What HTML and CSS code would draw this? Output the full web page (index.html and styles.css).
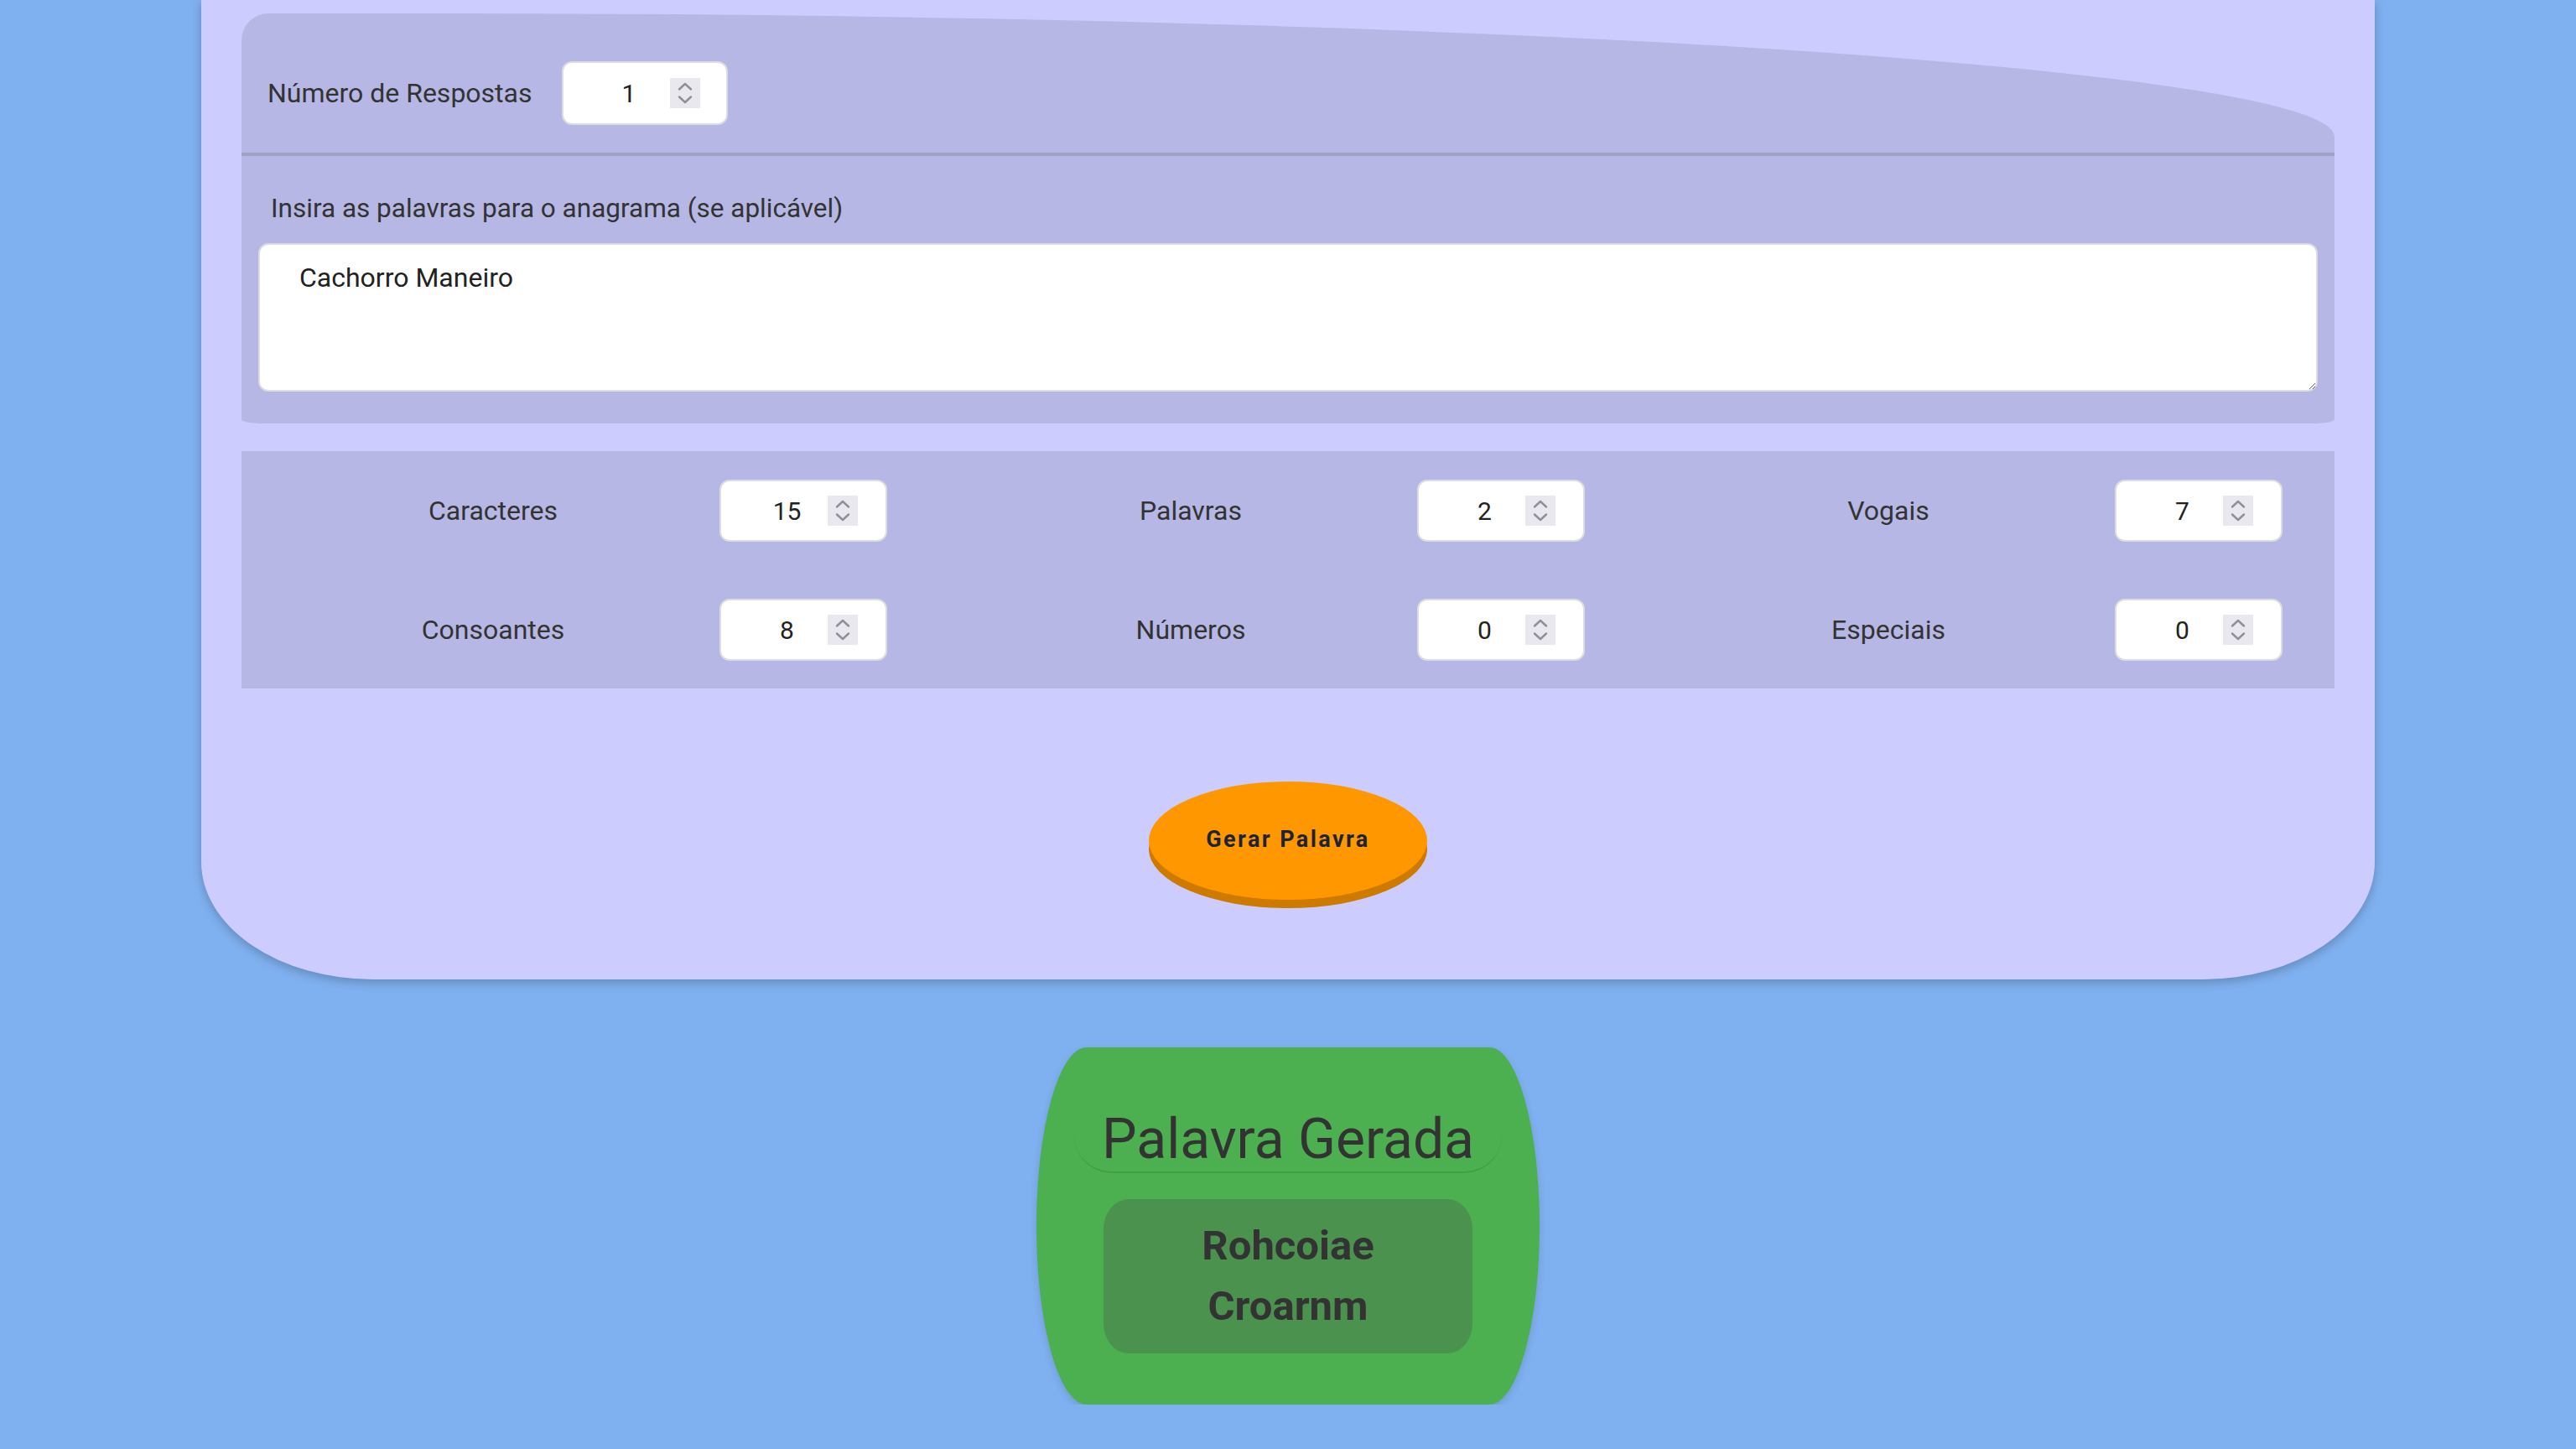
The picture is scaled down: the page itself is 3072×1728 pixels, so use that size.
FILE: index.html
```html
<!DOCTYPE html>
<html lang="pt">
<head>
<meta charset="utf-8">
<title>Gerador de Palavras</title>
<link rel="stylesheet" href="styles.css">
</head>
<body>
<div class="card">
  <div class="panel top-panel">
    <div class="resp-row">
      <span class="label">Número de Respostas</span>
      <div class="num num-resp"><span class="val">1</span><span class="spin"><svg viewBox="0 0 36 36" width="36" height="36"><path d="M11 13.5 L18 7 L25 13.5 M11 22.5 L18 29 L25 22.5" fill="none" stroke="#8e8e9c" stroke-width="2.4" stroke-linecap="round" stroke-linejoin="round"/></svg></span></div>
    </div>
    <div class="anagram">
      <label class="label anag-label" for="words">Insira as palavras para o anagrama (se aplicável)</label>
      <textarea id="words" class="words">Cachorro Maneiro</textarea>
    </div>
  </div>

  <div class="panel stats">
    <div class="cell"><span class="label stat-label">Caracteres</span><div class="num"><span class="val">15</span><span class="spin"><svg viewBox="0 0 36 36" width="36" height="36"><path d="M11 13.5 L18 7 L25 13.5 M11 22.5 L18 29 L25 22.5" fill="none" stroke="#8e8e9c" stroke-width="2.4" stroke-linecap="round" stroke-linejoin="round"/></svg></span></div></div>
    <div class="cell"><span class="label stat-label">Palavras</span><div class="num"><span class="val">2</span><span class="spin"><svg viewBox="0 0 36 36" width="36" height="36"><path d="M11 13.5 L18 7 L25 13.5 M11 22.5 L18 29 L25 22.5" fill="none" stroke="#8e8e9c" stroke-width="2.4" stroke-linecap="round" stroke-linejoin="round"/></svg></span></div></div>
    <div class="cell"><span class="label stat-label">Vogais</span><div class="num"><span class="val">7</span><span class="spin"><svg viewBox="0 0 36 36" width="36" height="36"><path d="M11 13.5 L18 7 L25 13.5 M11 22.5 L18 29 L25 22.5" fill="none" stroke="#8e8e9c" stroke-width="2.4" stroke-linecap="round" stroke-linejoin="round"/></svg></span></div></div>
    <div class="cell"><span class="label stat-label">Consoantes</span><div class="num"><span class="val">8</span><span class="spin"><svg viewBox="0 0 36 36" width="36" height="36"><path d="M11 13.5 L18 7 L25 13.5 M11 22.5 L18 29 L25 22.5" fill="none" stroke="#8e8e9c" stroke-width="2.4" stroke-linecap="round" stroke-linejoin="round"/></svg></span></div></div>
    <div class="cell"><span class="label stat-label">Números</span><div class="num"><span class="val">0</span><span class="spin"><svg viewBox="0 0 36 36" width="36" height="36"><path d="M11 13.5 L18 7 L25 13.5 M11 22.5 L18 29 L25 22.5" fill="none" stroke="#8e8e9c" stroke-width="2.4" stroke-linecap="round" stroke-linejoin="round"/></svg></span></div></div>
    <div class="cell"><span class="label stat-label">Especiais</span><div class="num"><span class="val">0</span><span class="spin"><svg viewBox="0 0 36 36" width="36" height="36"><path d="M11 13.5 L18 7 L25 13.5 M11 22.5 L18 29 L25 22.5" fill="none" stroke="#8e8e9c" stroke-width="2.4" stroke-linecap="round" stroke-linejoin="round"/></svg></span></div></div>
  </div>

  <div class="btn-wrap"><button class="gen" type="button">Gerar Palavra</button></div>
</div>

<div class="result">
  <h2 class="result-title">Palavra Gerada</h2>
  <div class="out">Rohcoiae Croarnm</div>
</div>
</body>
</html>
```

FILE: styles.css
```css
html, body {
  margin: 0;
  padding: 0;
}
body {
  background: #7fb0ef;
  font-family: Roboto, "Liberation Sans", sans-serif;
  color: #333;
}

.card {
  width: 2592px;
  margin: 0 auto;
  box-sizing: border-box;
  background: #ccccff;
  padding: 16px 48px 95px;
  border-radius: 0 0 205px 205px / 0 0 140px 140px;
  box-shadow: 0 4px 12px rgba(0, 0, 0, 0.22);
}

.panel {
  background: rgba(0, 0, 0, 0.1);
}

.top-panel {
  border-radius: 32px 2260px 22px 22px / 32px 147px 5px 5px;
}

.label {
  font-size: 32px;
  line-height: 40px;
  color: #333;
}

.resp-row {
  display: flex;
  align-items: center;
  padding: 57px 0 33px 31px;
  border-bottom: 4px solid rgba(0, 0, 0, 0.12);
}
.resp-row .label {
  margin-right: 35px;
}

.num {
  display: flex;
  align-items: center;
  width: 200px;
  height: 74px;
  box-sizing: border-box;
  background: #fff;
  border: 2px solid #dcdce2;
  border-radius: 12px;
  padding-left: 30px;
  padding-right: 33px;
}
.num-resp {
  width: 198px;
  height: 76px;
  padding-right: 31px;
}
.val {
  flex: 1;
  text-align: center;
  font-size: 30px;
  color: #222;
}
.spin {
  display: block;
  width: 36px;
  height: 36px;
  background: #e8e8ee;
}
.spin svg {
  display: block;
}

.anagram {
  padding: 43px 20px 38px;
}
.anag-label {
  display: block;
  padding-left: 15px;
  margin-bottom: 21px;
  font-size: 31.5px;
}
.words {
  display: block;
  width: 100%;
  height: 177px;
  box-sizing: border-box;
  border: 2px solid #dcdce2;
  border-radius: 12px;
  background: #fff;
  padding: 19px 47px 17px;
  font-family: Roboto, "Liberation Sans", sans-serif;
  font-size: 32px;
  line-height: 40px;
  color: #222;
  outline: none;
}

.stats {
  margin-top: 33px;
  padding: 34px 0 33px;
  display: grid;
  grid-template-columns: repeat(3, 1fr);
  grid-auto-rows: 74px;
  row-gap: 68px;
}
.cell {
  display: flex;
  align-items: center;
}
.stat-label {
  flex: 1;
  text-align: center;
  padding-left: 30px;
}
.cell .num {
  margin-right: 62px;
}

.btn-wrap {
  margin-top: 111px;
  display: flex;
  justify-content: center;
}
.gen {
  width: 332px;
  height: 141px;
  border: none;
  border-radius: 50%;
  background: #ff9800;
  box-shadow: 0 10px 0 #cc7a00;
  font-family: Roboto, "Liberation Sans", sans-serif;
  font-weight: 700;
  font-size: 27px;
  letter-spacing: 2.4px;
  color: #1c2436;
  padding: 0 0 4px;
  cursor: pointer;
}

.result {
  width: 600px;
  height: 426px;
  box-sizing: border-box;
  margin: 81px auto 0;
  padding-top: 72px;
  background: #4caf50;
  border-radius: 60px / 213px;
  box-shadow: 0 4px 10px rgba(0, 0, 0, 0.12);
}
.result-title {
  margin: 0 45px;
  font-size: 66px;
  font-weight: 400;
  line-height: 76px;
  text-align: center;
  color: #333;
  border-bottom: 2px solid rgba(0, 0, 0, 0.1);
  border-radius: 0 0 45px 45px;
}
.out {
  margin: 31px 80px 0;
  padding: 20px 60px;
  background: #4a924e;
  border-radius: 30px / 36px;
  font-size: 49px;
  font-weight: 700;
  line-height: 72px;
  text-align: center;
  color: #333;
}
```
